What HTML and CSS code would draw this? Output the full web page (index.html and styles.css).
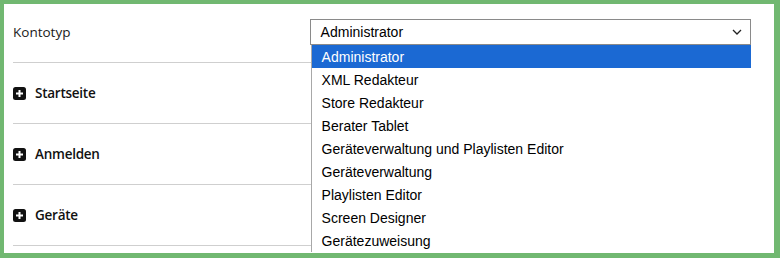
FILE: index.html
```html
<!DOCTYPE html>
<html lang="de">

<head>
    <meta charset="UTF-8">
    <meta name="viewport" content="width=device-width, initial-scale=1.0">
    <title>Konto</title>
    <link rel="stylesheet" href="styles.css">
</head>

<body>
    <div class="panel">
        <div class="row account">
            <div class="label">Kontotyp</div>
            <div class="picker">
                <div class="select-box">
                    <span>Administrator</span>
                    <svg class="chevron" width="10" height="6" viewBox="0 0 10 6">
                        <path d="M1 1 L5 5 L9 1" fill="none" stroke="#222" stroke-width="1.3" />
                    </svg>
                </div>
                <ul class="options">
                    <li class="active">Administrator</li>
                    <li>XML Redakteur</li>
                    <li>Store Redakteur</li>
                    <li>Berater Tablet</li>
                    <li>Geräteverwaltung und Playlisten Editor</li>
                    <li>Geräteverwaltung</li>
                    <li>Playlisten Editor</li>
                    <li>Screen Designer</li>
                    <li>Gerätezuweisung</li>
                </ul>
            </div>
        </div>

        <div class="row section">
            <svg class="plus" width="13" height="13" viewBox="0 0 13 13">
                <rect x="0" y="0" width="13" height="13" rx="2.5" fill="#111" />
                <path d="M6.5 3 V10 M3 6.5 H10" stroke="#fff" stroke-width="2" />
            </svg>
            <span>Startseite</span>
        </div>

        <div class="row section">
            <svg class="plus" width="13" height="13" viewBox="0 0 13 13">
                <rect x="0" y="0" width="13" height="13" rx="2.5" fill="#111" />
                <path d="M6.5 3 V10 M3 6.5 H10" stroke="#fff" stroke-width="2" />
            </svg>
            <span>Anmelden</span>
        </div>

        <div class="row section">
            <svg class="plus" width="13" height="13" viewBox="0 0 13 13">
                <rect x="0" y="0" width="13" height="13" rx="2.5" fill="#111" />
                <path d="M6.5 3 V10 M3 6.5 H10" stroke="#fff" stroke-width="2" />
            </svg>
            <span>Geräte</span>
        </div>
    </div>
</body>

</html>
```

FILE: styles.css
```css
* {
    box-sizing: border-box;
}

body {
    margin: 0;
    height: 258px;
    overflow: hidden;
    background-color: #71b871;
    font-family: "Open Sans", sans-serif;
    font-size: 13.5px;
    color: #1a1a1a;
}

.panel {
    margin: 4px 6px 5px 4px;
    height: 249px;
    background-color: #fff;
    overflow: hidden;
}

.row {
    display: flex;
    align-items: center;
    margin: 0 23px 0 9px;
    border-bottom: 1px solid #cfcfcf;
}

.account {
    height: 59px;
    align-items: flex-start;
}

.account .label {
    width: 297px;
    margin-top: 19px;
}

.picker {
    position: relative;
    width: 442px;
    margin-top: 15px;
}

.select-box {
    height: 26px;
    display: flex;
    align-items: center;
    justify-content: space-between;
    padding: 0 8px 0 10px;
    border: 1px solid #8a8a8a;
    font-family: "Liberation Sans", Arial, sans-serif;
    font-size: 14px;
    color: #000;
}

.options {
    position: absolute;
    top: 26px;
    left: 1px;
    width: 440px;
    margin: 0;
    padding: 0;
    list-style: none;
    background-color: #fff;
    border-left: 1px solid #a8a8a8;
    font-family: "Liberation Sans", Arial, sans-serif;
    font-size: 14px;
    color: #000;
    z-index: 2;
}

.options li {
    height: 23px;
    line-height: 21px;
    padding: 2px 0 0 10px;
}

.options li.active {
    background-color: #1b69d3;
    color: #fff;
}

.section {
    height: 61px;
    gap: 9px;
    font-size: 13.5px;
    font-weight: 600;
    letter-spacing: -0.25px;
    color: #111;
}

.plus {
    flex: none;
}
```
